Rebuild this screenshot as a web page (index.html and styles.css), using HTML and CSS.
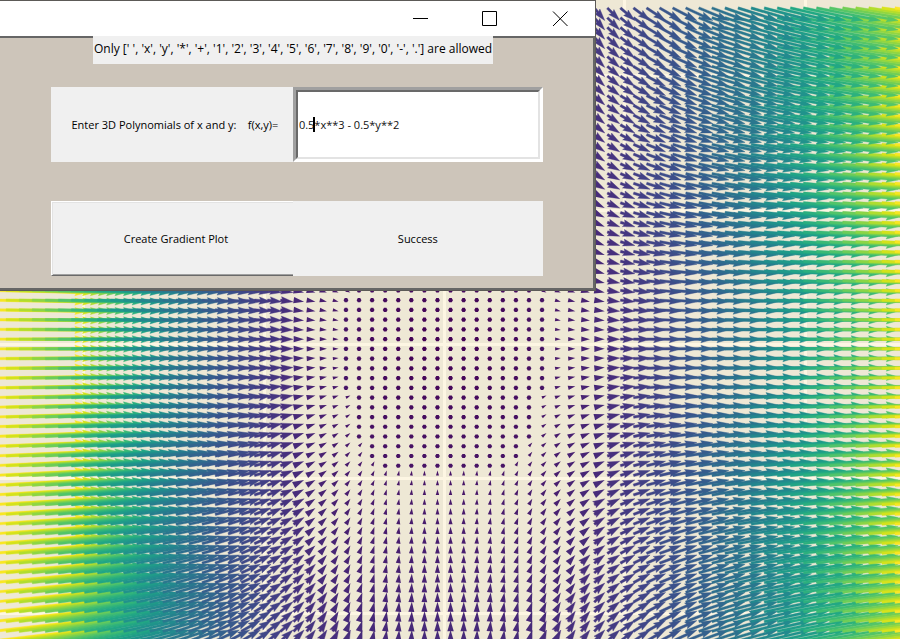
FILE: index.html
```html
<!DOCTYPE html>
<html lang="en">
<head>
<meta charset="utf-8">
<title>Gradient Plot</title>
<link rel="stylesheet" href="styles.css">
</head>
<body>
<main class="desktop">
  <svg class="plot" id="plot" viewBox="0 0 900 639" preserveAspectRatio="xMinYMin slice" role="img" aria-label="Gradient field"></svg>
  <section class="window">
    <header class="titlebar">
      <button class="control" type="button" aria-label="Minimize"><svg width="16" height="16" viewBox="0 0 16 16"><path d="M1 7.500H16"/></svg></button>
      <button class="control" type="button" aria-label="Maximize"><svg width="16" height="16" viewBox="0 0 16 16"><path d="M0.500 0.500H14.500V14.500H0.500Z"/></svg></button>
      <button class="control" type="button" aria-label="Close"><svg width="16" height="16" viewBox="0 0 16 16"><path d="M1 0.500L15.500 15M15.500 0.500L1 15"/></svg></button>
    </header>
    <form class="content">
      <p class="hint">Only [' ', 'x', 'y', '*', '+', '1', '2', '3', '4', '5', '6', '7', '8', '9', '0', '-', '.'] are allowed</p>
      <div class="row">
        <label class="cell prompt" for="poly">Enter 3D Polynomials of x and y: &nbsp;&nbsp; f(x,y)=</label>
        <div class="entry">
          <input id="poly" type="text" value="0.5*x**3 - 0.5*y**2">
          <span class="caret"></span>
        </div>
      </div>
      <div class="row">
        <button class="cell create" type="button">Create Gradient Plot</button>
        <output class="cell">Success</output>
      </div>
    </form>
  </section>
</main>
<script src="plot.js"></script>
</body>
</html>
```
FILE: styles.css
```css
* {
  box-sizing: border-box;
}

body {
  margin: 0;
  background: #eee8d5;
  color: #000;
  font-family: "Open Sans", "Noto Sans", sans-serif;
  font-size: 11px;
  line-height: 16px;
  overflow: hidden;
}

.desktop {
  display: grid;
  height: 100vh;
}

.plot {
  grid-area: 1 / 1;
  width: 100%;
  height: 100%;
  min-height: 0;
}

.gridline {
  stroke: #fdf6e3;
  stroke-width: 3;
}

.window {
  grid-area: 1 / 1;
  align-self: start;
  width: 66.2vw;
  min-width: 540px;
  position: relative;
  border-top: 1px solid #5c5a57;
  border-right: 1px solid #5c5a57;
  border-bottom: 1px solid #5c5a57;
}

.titlebar {
  display: flex;
  justify-content: flex-end;
  height: 35px;
  background: #fff;
}

.control {
  width: 70px;
  padding: 0;
  border: 0;
  background: none;
  display: grid;
  place-items: center;
}

.control path {
  fill: none;
  stroke: #000;
  stroke-width: 1;
}

.content {
  background: #cdc5ba;
  border-top: 2px solid #666;
  border-right: 2px solid #666;
  border-bottom: 2px solid #666;
  padding: 0 50px 12px 51px;
}

.hint {
  width: max-content;
  min-width: 400px;
  height: 28px;
  margin: -2px 0 23px 42px;
  padding: 5px 1px;
  background: #f0f0f0;
  font-size: 12px;
  text-align: center;
  white-space: nowrap;
}

.row {
  display: grid;
  grid-template-columns: 242fr 250fr;
  height: 75px;
}

.row + .row {
  margin-top: 39px;
}

.cell {
  display: grid;
  place-items: center;
  background: #f0f0f0;
  font: inherit;
  color: inherit;
  white-space: nowrap;
}

.prompt {
  padding-left: 6px;
}

.entry {
  display: grid;
  position: relative;
  border: 3px solid;
  border-color: #a0a0a0 #fff #fff #a0a0a0;
}

.entry input {
  width: 100%;
  padding: 0 1px;
  border: 2px solid;
  border-color: #696969 #e3e3e3 #e3e3e3 #696969;
  border-radius: 0;
  background: #fff;
  font: inherit;
  color: #111;
  outline: none;
}

.caret {
  position: absolute;
  left: 17px;
  top: 27px;
  width: 2px;
  height: 15px;
  background: #000;
}

.create {
  padding: 0 0 0 7px;
  border: solid;
  border-width: 1px 0 1px 1px;
  border-color: #fff #696969 #696969 #fff;
  box-shadow: inset 1px 1px #e3e3e3, inset 0 -1px #a0a0a0;
}
```
FILE: plot.js
```js
// Gradient of f(x, y) = 0.5x^3 - 0.5y^2 drawn as a field of arrows.
const plot = document.getElementById("plot");
const COUNT = 70;
const LIMIT = 5;
const ORIGIN = { x: 444, y: 344 };
const UNIT = { x: 90.2, y: 67.2 };
const SCALE = 2.5;
const WIDTH = 2.38;
const MIN_LENGTH = 4.81;

const VIRIDIS = [
  [68, 1, 84], [72, 26, 108], [71, 47, 125], [65, 68, 135], [57, 86, 140],
  [49, 104, 142], [42, 120, 142], [35, 136, 142], [31, 152, 139], [34, 168, 132],
  [53, 183, 121], [84, 197, 104], [122, 209, 81], [165, 219, 54], [210, 226, 27],
  [253, 231, 37]
];

function color(t) {
  const p = Math.min(t, 1) * (VIRIDIS.length - 1);
  const i = Math.min(Math.floor(p), VIRIDIS.length - 2);
  const mix = VIRIDIS[i].map((c, k) => Math.round(c + (VIRIDIS[i + 1][k] - c) * (p - i)));
  return `rgb(${mix})`;
}

function hexagon(x, y) {
  const points = [];
  for (let k = 0; k < 6; k++) {
    const a = k * Math.PI / 3;
    points.push([x + Math.cos(a) * MIN_LENGTH / 2, y + Math.sin(a) * MIN_LENGTH / 2]);
  }
  return points;
}

function arrow(x, y, u, v) {
  const length = Math.hypot(u, v) * SCALE;
  if (length < MIN_LENGTH) return hexagon(x, y);
  const k = Math.min(1, length / (5 * WIDTH)) * WIDTH;
  const cos = u * SCALE / length;
  const sin = -v * SCALE / length;
  const outline = [
    [0, -k / 2], [length - 4.5 * k, -k / 2], [length - 5 * k, -1.5 * k], [length, 0],
    [length - 5 * k, 1.5 * k], [length - 4.5 * k, k / 2], [0, k / 2]
  ];
  const visible = length < 5 * WIDTH ? outline.slice(2, 5) : outline;
  return visible.map(([a, b]) => [x + a * cos - b * sin, y + a * sin + b * cos]);
}

let markup = "";
for (let t = -4; t <= 4; t += 2) {
  const gx = Math.round(ORIGIN.x + t * UNIT.x) + 0.5;
  const gy = Math.round(ORIGIN.y + t * UNIT.y) + 0.5;
  markup += `<path class="gridline" d="M${gx} 0V639M0 ${gy}H900"/>`;
}

const peak = Math.hypot(1.5 * LIMIT * LIMIT, LIMIT);
for (let row = 0; row < COUNT; row++) {
  const y = -LIMIT + 2 * LIMIT * row / (COUNT - 1);
  for (let col = 0; col < COUNT; col++) {
    const x = -LIMIT + 2 * LIMIT * col / (COUNT - 1);
    const u = 1.5 * x * x;
    const v = -y;
    const points = arrow(ORIGIN.x + x * UNIT.x, ORIGIN.y - y * UNIT.y, u, v);
    const list = points.map(p => p.map(n => n.toFixed(2)).join()).join(" ");
    const magnitude = Math.hypot(u, v);
    const paint = color(magnitude / peak);
    const edge = magnitude * SCALE < 5 * WIDTH ? 0 : 0.4;
    markup += `<polygon points="${list}" fill="${paint}" stroke="${paint}" stroke-width="${edge}"/>`;
  }
}
plot.innerHTML = markup;
```
